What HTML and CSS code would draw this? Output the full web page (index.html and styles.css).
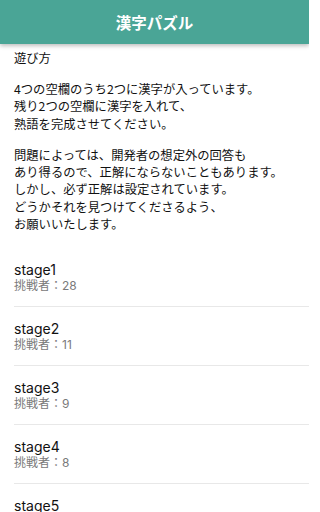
FILE: index.html
```html
<!DOCTYPE html>
<html lang="ja">
<head>
<meta charset="utf-8">
<title>漢字パズル</title>
<link rel="stylesheet" href="styles.css">
</head>
<body>
<header class="appbar">
  <h1 class="appbar-title">漢字パズル</h1>
</header>
<main class="content">
  <section class="howto">
    <p class="para">遊び方</p>
    <p class="para">4つの空欄のうち2つに漢字が入っています。<br>残り2つの空欄に漢字を入れて、<br>熟語を完成させてください。</p>
    <p class="para">問題によっては、開発者の想定外の回答も<br>あり得るので、正解にならないこともあります。<br>しかし、必ず正解は設定されています。<br>どうかそれを見つけてくださるよう、<br>お願いいたします。</p>
  </section>
  <ul class="stages">
    <li class="stage"><div class="stage-name">stage1</div><div class="stage-count">挑戦者：28</div></li>
    <li class="stage"><div class="stage-name">stage2</div><div class="stage-count">挑戦者：11</div></li>
    <li class="stage"><div class="stage-name">stage3</div><div class="stage-count">挑戦者：9</div></li>
    <li class="stage"><div class="stage-name">stage4</div><div class="stage-count">挑戦者：8</div></li>
    <li class="stage"><div class="stage-name">stage5</div><div class="stage-count">挑戦者：7</div></li>
  </ul>
</main>
</body>
</html>
```

FILE: styles.css
```css
html, body {
  margin: 0;
  padding: 0;
  background: #ffffff;
  overflow: hidden;
}
body {
  font-family: "Noto Sans CJK JP", "Noto Sans", sans-serif;
  color: #111111;
  width: 309px;
  height: 512px;
  position: relative;
}
.appbar {
  height: 44px;
  background: #4aa596;
  display: flex;
  align-items: center;
  justify-content: center;
  box-shadow: 0 2px 4px rgba(0, 0, 0, 0.25);
  position: relative;
  z-index: 2;
}
.appbar-title {
  margin: 0;
  color: #ffffff;
  font-size: 15.5px;
  font-weight: 700;
  line-height: 20px;
}
.content {
  padding-top: 6px;
}
.howto {
  padding: 0 14px;
}
.para {
  margin: 0 0 13.7px 0;
  font-size: 12.3px;
  line-height: 17.33px;
  white-space: nowrap;
}
.para:last-child {
  margin-bottom: 0;
}
.stages {
  list-style: none;
  margin: 15px 0 0 0;
  padding: 0;
}
.stage {
  margin-left: 14px;
  padding: 13px 0 12px 0;
  border-bottom: 1px solid #e8e8e8;
}
.stage-name {
  font-family: Inter, "Noto Sans", sans-serif;
  font-size: 14px;
  line-height: 17px;
  color: #111111;
}
.stage-count {
  font-family: Inter, "Noto Sans CJK JP", sans-serif;
  font-size: 12px;
  line-height: 16px;
  color: #7a7a7a;
}
```
